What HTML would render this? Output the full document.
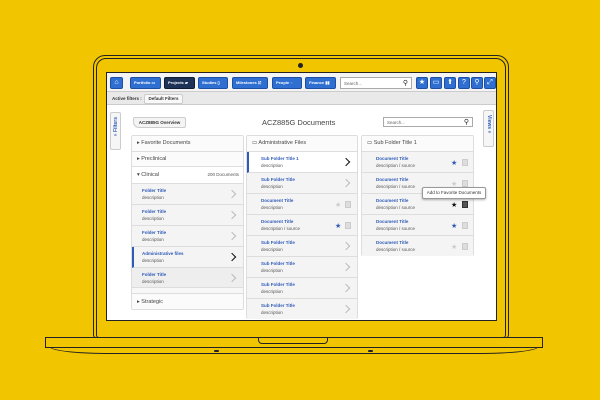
<!DOCTYPE html><html><head><style>
*{box-sizing:border-box;margin:0;padding:0}
body{width:600px;height:400px;background:#f1c500;position:relative;overflow:hidden;font-family:"Liberation Sans",sans-serif}
.a{position:absolute}
.btn{position:absolute;top:77px;height:12px;background:#2f6fd1;border:1px solid #1f4fa0;border-radius:2px;color:#fff;font-size:4px;font-weight:bold;line-height:10px;padding-left:3px}
.ib{position:absolute;top:77px;width:12px;height:12px;background:#2f6fd1;border:1px solid #1f4fa0;border-radius:2px;color:#fff;font-size:7px;text-align:center;line-height:10px}
.panel{position:absolute;background:#fff;border:1px solid #ddd;border-radius:2px}
.row{position:absolute;left:0;right:0;border-bottom:1px solid #ddd;background:#f4f4f4}
.t{position:absolute;font-size:4.5px;color:#2e5ab8;font-weight:bold}
.d{position:absolute;font-size:4.5px;color:#555}
.h{position:absolute;font-size:5.5px;color:#444}
.chev{position:absolute;right:8px;top:7px;width:6px;height:6px;border-top:1.2px solid #bbb;border-right:1.2px solid #bbb;transform:rotate(45deg)}
.chev.k{border-color:#111;border-width:1.8px}
.star{position:absolute;font-size:7px;color:#ccc}
.cb{position:absolute;width:6px;height:7px;background:#ddd;border:1px solid #ccc}
</style></head><body>
<div class="a" style="left:93px;top:55px;width:416px;height:283px;border:1.5px solid #222;border-radius:12px 12px 3px 3px"></div>
<div class="a" style="left:96px;top:58px;width:410px;height:280px;border:1px solid #222;border-radius:10px 10px 3px 3px"></div>
<div class="a" style="left:298px;top:63px;width:5px;height:5px;border-radius:50%;background:#222"></div>
<div class="a" style="left:45px;top:337px;width:498px;height:11px;border:1.2px solid #222;background:#f1c500"></div>
<div class="a" style="left:50px;top:347px;width:488px;height:7px;border:1.2px solid #222;border-top:none;border-radius:0 0 60px 60px/0 0 7px 7px"></div>
<div class="a" style="left:258px;top:337px;width:70px;height:7px;border:1.2px solid #222;border-top:none;border-radius:0 0 4px 4px"></div>
<div class="a" style="left:214px;top:350px;width:5px;height:2px;background:#222;border-radius:1px"></div>
<div class="a" style="left:368px;top:350px;width:5px;height:2px;background:#222;border-radius:1px"></div>
<div class="a" style="left:106px;top:72px;width:391px;height:249px;background:#fff;border:1px solid #222;overflow:hidden"></div>
<div class="a" style="left:107px;top:73px;width:389px;height:19px;background:#f4f4f4;border-bottom:1px solid #ccc"></div>
<div class="a" style="left:107px;top:92px;width:389px;height:13px;background:#e9e9e9;border-bottom:1px solid #ccc"></div>
<div class="ib" style="left:110px;width:13px">⌂</div>
<div class="btn" style="left:130px;width:31px">Portfolio ▭</div>
<div class="btn" style="left:164px;width:31px;background:#1e3258;border-color:#101c33">Projects ▰</div>
<div class="btn" style="left:198px;width:30px">Studies ▯</div>
<div class="btn" style="left:232px;width:36px">Milestones ☑</div>
<div class="btn" style="left:272px;width:30px">People ◌</div>
<div class="btn" style="left:305px;width:31px">Finance ▮▮</div>
<div class="a" style="left:340px;top:77px;width:72px;height:12px;background:#fff;border:1px solid #aaa;font-size:4.5px;color:#666;padding:3px 3px">Search...<span style="position:absolute;right:3px;top:1px;font-size:7px;color:#222">⚲</span></div>
<div class="ib" style="left:416px">★</div><div class="ib" style="left:430px">▭</div><div class="ib" style="left:444px">⬆</div><div class="ib" style="left:458px">?</div><div class="ib" style="left:471px">⚲</div><div class="ib" style="left:484px">⤢</div>
<div class="a" style="left:112px;top:96px;font-size:4.5px;color:#333;font-weight:bold">Active filters :</div>
<div class="a" style="left:144px;top:94px;width:39px;height:10px;background:#f8f8f8;border:1px solid #ccc;border-radius:2px;font-size:4.5px;font-weight:bold;color:#333;text-align:center;line-height:8px">Default Filters</div>
<div class="a" style="left:110px;top:112px;width:11px;height:38px;background:#f6f6f6;border:1px solid #ccc;border-radius:2px"><div style="position:absolute;left:2px;top:4px;writing-mode:vertical-rl;transform:rotate(180deg);font-size:5px;font-weight:bold;color:#2e5ab8">» Filters</div></div>
<div class="a" style="left:483px;top:110px;width:11px;height:37px;background:#f6f6f6;border:1px solid #ccc;border-radius:2px"><div style="position:absolute;left:2px;top:4px;writing-mode:vertical-rl;font-size:5px;font-weight:bold;color:#2e5ab8">Views «</div></div>
<div class="a" style="left:133px;top:117px;width:53px;height:11px;background:#f4f4f4;border:1px solid #ccc;border-radius:2px 2px 2px 6px;font-size:4.5px;font-weight:bold;color:#333;text-align:center;line-height:9px">ACZ885G Overview</div>
<div class="a" style="left:262px;top:118px;font-size:7.5px;color:#444">ACZ885G Documents</div>
<div class="a" style="left:383px;top:117px;width:90px;height:10px;background:#fff;border:1px solid #aaa;font-size:4.5px;color:#666;padding:2px 3px">Search...<span style="position:absolute;right:3px;top:0;font-size:7px;color:#222">⚲</span></div>
<div class="panel" style="left:131px;top:135px;width:113px;height:175px;background:#f7f7f7">
<div class="row" style="top:0;height:16px;background:#fbfbfb"><div class="h" style="left:5px;top:4px">▸ Favorite Documents</div></div>
<div class="row" style="top:16px;height:15px;background:#fbfbfb"><div class="h" style="left:5px;top:4px">▸ Preclinical</div></div>
<div class="row" style="top:31px;height:17px;background:#fff"><div class="h" style="left:5px;top:5px">▾ Clinical</div><div class="d" style="right:4px;top:5px">200 Documents</div></div>
<div class="row" style="top:48px;height:21px"><div class="t" style="left:10px;top:4px">Folder Title</div><div class="d" style="left:10px;top:11px">description</div><div class="chev"></div></div>
<div class="row" style="top:69px;height:21px"><div class="t" style="left:10px;top:4px">Folder Title</div><div class="d" style="left:10px;top:11px">description</div><div class="chev"></div></div>
<div class="row" style="top:90px;height:21px"><div class="t" style="left:10px;top:4px">Folder Title</div><div class="d" style="left:10px;top:11px">description</div><div class="chev"></div></div>
<div class="row" style="top:111px;height:21px;border-left:2px solid #2e5ab8"><div class="t" style="left:8px;top:4px">Administrative files</div><div class="d" style="left:8px;top:11px">description</div><div class="chev k"></div></div>
<div class="row" style="top:132px;height:20px;background:#eee"><div class="t" style="left:10px;top:4px">Folder Title</div><div class="d" style="left:10px;top:11px">description</div><div class="chev"></div></div>
<div class="row" style="top:157px;height:17px;background:#fbfbfb;border-top:1px solid #ddd"><div class="h" style="left:5px;top:5px">▸ Strategic</div></div>
</div>
<div class="panel" style="left:246px;top:135px;width:112px;height:184px">
<div class="row" style="top:0;height:16px;background:#fbfbfb"><div class="h" style="left:5px;top:4px">▭ Administrative Files</div></div>
<div class="row" style="top:16px;height:21px;border-left:2px solid #2e5ab8;background:#fff"><div class="t" style="left:12px;top:4px">Sub Folder Title 1</div><div class="d" style="left:12px;top:11px">description</div><div class="chev k"></div></div>
<div class="row" style="top:37px;height:21px"><div class="t" style="left:14px;top:4px">Sub Folder Title</div><div class="d" style="left:14px;top:11px">description</div><div class="chev"></div></div>
<div class="row" style="top:58px;height:21px"><div class="t" style="left:14px;top:4px">Document Title</div><div class="d" style="left:14px;top:11px">description</div><div class="star" style="left:88px;top:7px">★</div><div class="cb" style="left:98px;top:7px"></div></div>
<div class="row" style="top:79px;height:21px"><div class="t" style="left:14px;top:4px">Document Title</div><div class="d" style="left:14px;top:11px">description / source</div><div class="star" style="left:88px;top:7px;color:#2e5ab8">★</div><div class="cb" style="left:98px;top:7px"></div></div>
<div class="row" style="top:100px;height:21px"><div class="t" style="left:14px;top:4px">Sub Folder Title</div><div class="d" style="left:14px;top:11px">description</div><div class="chev"></div></div>
<div class="row" style="top:121px;height:21px"><div class="t" style="left:14px;top:4px">Sub Folder Title</div><div class="d" style="left:14px;top:11px">description</div><div class="chev"></div></div>
<div class="row" style="top:142px;height:21px"><div class="t" style="left:14px;top:4px">Sub Folder Title</div><div class="d" style="left:14px;top:11px">description</div><div class="chev"></div></div>
<div class="row" style="top:163px;height:20px;border-bottom:none"><div class="t" style="left:14px;top:4px">Sub Folder Title</div><div class="d" style="left:14px;top:11px">description</div><div class="chev"></div></div>
</div>
<div class="panel" style="left:361px;top:135px;width:113px;height:121px">
<div class="row" style="top:0;height:16px;background:#fbfbfb"><div class="h" style="left:5px;top:4px">▭ Sub Folder Title 1</div></div>
<div class="row" style="top:16px;height:21px"><div class="t" style="left:14px;top:4px">Document Title</div><div class="d" style="left:14px;top:11px">description / source</div><div class="star" style="left:89px;top:7px;color:#2e5ab8">★</div><div class="cb" style="left:100px;top:7px"></div></div>
<div class="row" style="top:37px;height:21px"><div class="t" style="left:14px;top:4px">Document Title</div><div class="d" style="left:14px;top:11px">description / source</div><div class="star" style="left:89px;top:7px">★</div><div class="cb" style="left:100px;top:7px"></div></div>
<div class="row" style="top:58px;height:21px"><div class="t" style="left:14px;top:4px">Document Title</div><div class="d" style="left:14px;top:11px">description / source</div><div class="star" style="left:89px;top:7px;color:#111">★</div><div class="cb" style="left:100px;top:7px;background:#555;border-color:#333"></div></div>
<div class="row" style="top:79px;height:21px"><div class="t" style="left:14px;top:4px">Document Title</div><div class="d" style="left:14px;top:11px">description / source</div><div class="star" style="left:89px;top:7px;color:#2e5ab8">★</div><div class="cb" style="left:100px;top:7px"></div></div>
<div class="row" style="top:100px;height:20px;border-bottom:none"><div class="t" style="left:14px;top:4px">Document Title</div><div class="d" style="left:14px;top:11px">description / source</div><div class="star" style="left:89px;top:7px">★</div><div class="cb" style="left:100px;top:7px"></div></div>
</div>
<div class="a" style="left:422px;top:187px;width:64px;height:12px;background:#fff;border:1px solid #999;border-radius:2px;font-size:4.5px;color:#333;text-align:center;line-height:10px;box-shadow:0 1px 2px rgba(0,0,0,.3)">Add to Favorite Documents</div>
</body></html>
